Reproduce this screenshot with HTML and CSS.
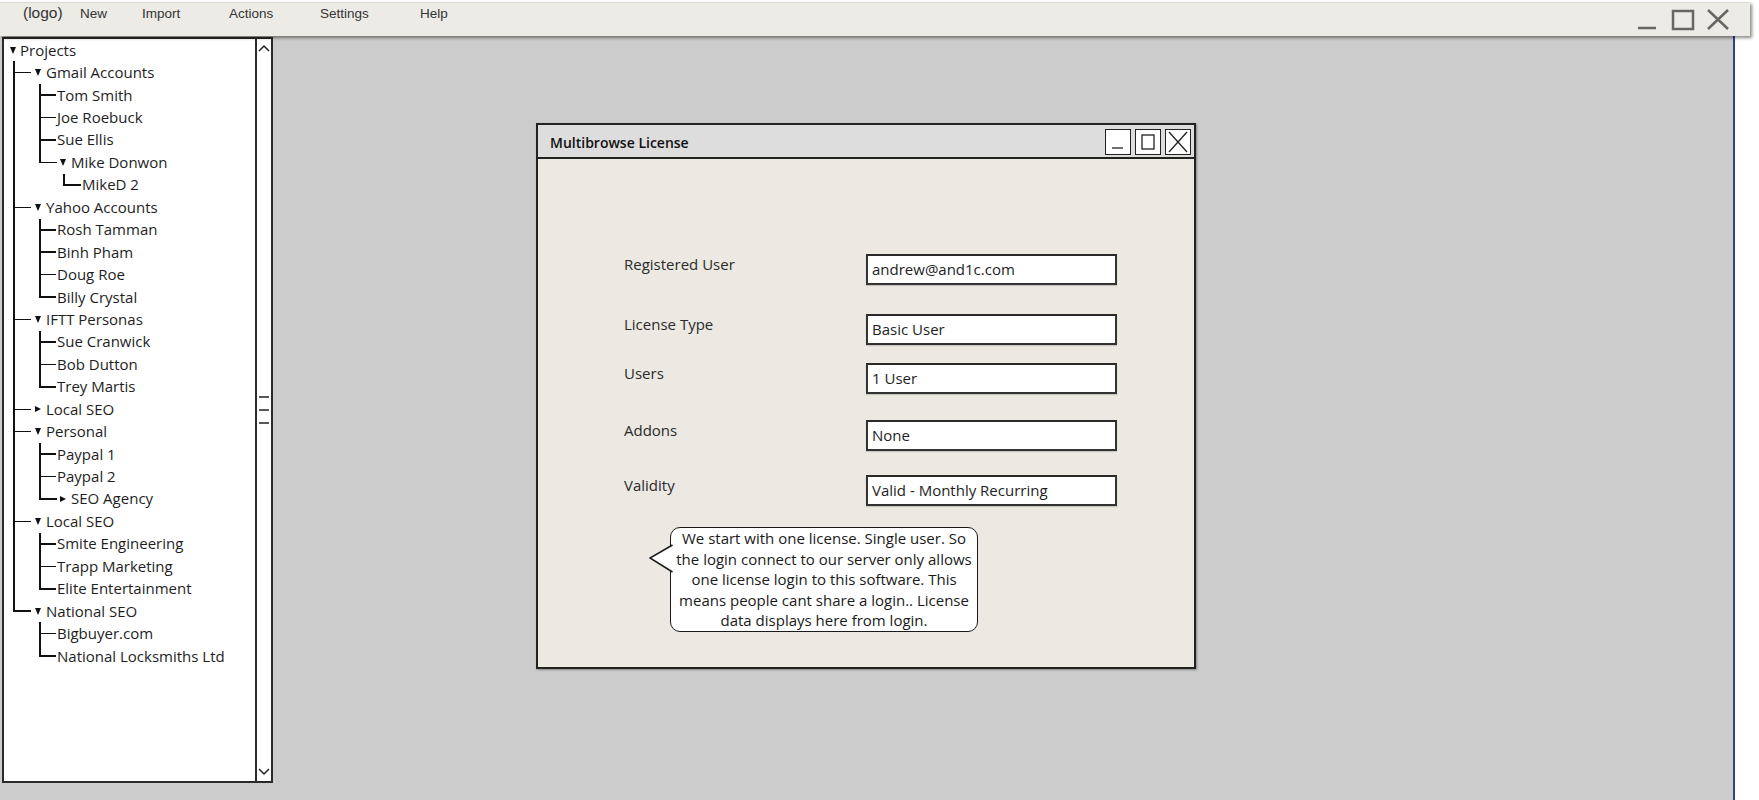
FILE: index.html
```html
<!DOCTYPE html>
<html lang="en">
<head>
<meta charset="utf-8">
<title>Multibrowse</title>
<link rel="stylesheet" href="styles.css">
</head>
<body>
<header class="topbar">
  <nav class="menu">
    <span class="mi m-logo">(logo)</span>
    <span class="mi m-new">New</span>
    <span class="mi m-import">Import</span>
    <span class="mi m-actions">Actions</span>
    <span class="mi m-settings">Settings</span>
    <span class="mi m-help">Help</span>
  </nav>
  <svg class="winctl" width="92" height="34" viewBox="0 0 92 34">
    <line x1="0" y1="26" x2="18" y2="26"/>
    <rect x="35" y="9" width="20" height="18"/>
    <line x1="70" y1="8" x2="90" y2="27"/>
    <line x1="90" y1="8" x2="70" y2="27"/>
  </svg>
</header>

<main class="workspace">
  <aside class="panel">
    <div class="treewrap">
      <ul class="tree">
        <li class="root">
          <div class="row"><i class="tri down"></i>Projects</div>
          <ul class="l1">
            <li class="folder">
              <div class="row"><i class="tri down"></i>Gmail Accounts</div>
              <ul class="l2">
                <li><div class="row">Tom Smith</div></li>
                <li><div class="row">Joe Roebuck</div></li>
                <li><div class="row">Sue Ellis</div></li>
                <li class="folder">
                  <div class="row"><i class="tri down"></i>Mike Donwon</div>
                  <ul class="l3">
                    <li><div class="row">MikeD 2</div></li>
                  </ul>
                </li>
              </ul>
            </li>
            <li class="folder">
              <div class="row"><i class="tri down"></i>Yahoo Accounts</div>
              <ul class="l2">
                <li><div class="row">Rosh Tamman</div></li>
                <li><div class="row">Binh Pham</div></li>
                <li><div class="row">Doug Roe</div></li>
                <li><div class="row">Billy Crystal</div></li>
              </ul>
            </li>
            <li class="folder">
              <div class="row"><i class="tri down"></i>IFTT Personas</div>
              <ul class="l2">
                <li><div class="row">Sue Cranwick</div></li>
                <li><div class="row">Bob Dutton</div></li>
                <li><div class="row">Trey Martis</div></li>
              </ul>
            </li>
            <li class="folder">
              <div class="row"><i class="tri right"></i>Local SEO</div>
            </li>
            <li class="folder">
              <div class="row"><i class="tri down"></i>Personal</div>
              <ul class="l2">
                <li><div class="row">Paypal 1</div></li>
                <li><div class="row">Paypal 2</div></li>
                <li class="folder"><div class="row"><i class="tri right"></i>SEO Agency</div></li>
              </ul>
            </li>
            <li class="folder">
              <div class="row"><i class="tri down"></i>Local SEO</div>
              <ul class="l2">
                <li><div class="row">Smite Engineering</div></li>
                <li><div class="row">Trapp Marketing</div></li>
                <li><div class="row">Elite Entertainment</div></li>
              </ul>
            </li>
            <li class="folder">
              <div class="row"><i class="tri down"></i>National SEO</div>
              <ul class="l2">
                <li><div class="row">Bigbuyer.com</div></li>
                <li><div class="row">National Locksmiths Ltd</div></li>
              </ul>
            </li>
          </ul>
        </li>
      </ul>
    </div>
    <div class="scrollbar">
      <svg class="sb-arrow" width="14" height="14" viewBox="0 0 14 14"><polyline points="2,10 7,5 12,10"/></svg>
      <svg class="sb-grip" width="14" height="30" viewBox="0 0 14 30"><line x1="2" y1="2" x2="12" y2="2"/><line x1="2" y1="15" x2="12" y2="15"/><line x1="2" y1="28" x2="12" y2="28"/></svg>
      <svg class="sb-arrow" width="14" height="14" viewBox="0 0 14 14"><polyline points="2,4 7,9 12,4"/></svg>
    </div>
  </aside>

  <section class="stage">
    <div class="dialog">
      <div class="titlebar">
        <span class="title">Multibrowse License</span>
        <div class="tbtns">
          <span class="tbtn"><svg width="24" height="24" viewBox="0 0 24 24"><line x1="6" y1="18" x2="17" y2="18"/></svg></span>
          <span class="tbtn"><svg width="24" height="24" viewBox="0 0 24 24"><rect x="6" y="5" width="12" height="14"/></svg></span>
          <span class="tbtn"><svg width="24" height="24" viewBox="0 0 24 24"><line x1="3" y1="2" x2="21" y2="22"/><line x1="21" y1="2" x2="3" y2="22"/></svg></span>
        </div>
      </div>
      <div class="dbody">
        <div class="form">
          <div class="field f1"><label>Registered User</label><div class="input">andrew@and1c.com</div></div>
          <div class="field f2"><label>License Type</label><div class="input">Basic User</div></div>
          <div class="field f3"><label>Users</label><div class="input">1 User</div></div>
          <div class="field f4"><label>Addons</label><div class="input">None</div></div>
          <div class="field f5"><label>Validity</label><div class="input">Valid - Monthly Recurring</div></div>
        </div>
        <div class="callout">
          <svg class="pointer" width="24" height="30" viewBox="0 0 24 30"><polyline points="23.5,1 1,14 23.5,28"/></svg>
          <p>We start with one license. Single user. So<br>the login connect to our server only allows<br>one license login to this software. This<br>means people cant share a login.. License<br>data displays here from login.</p>
        </div>
      </div>
    </div>
  </section>
</main>
</body>
</html>
```

FILE: styles.css
```css
* { box-sizing: border-box; }

html, body {
  margin: 0;
  padding: 0;
  background: #ffffff;
  overflow: hidden;
}

body {
  width: 1759px;
  height: 800px;
  font-family: "Open Sans", "Noto Sans", sans-serif;
  color: #222;
}

/* ---------- top bar ---------- */
.topbar {
  position: relative;
  z-index: 2;
  display: flex;
  align-items: flex-start;
  width: 1750px;
  height: 34px;
  margin-top: 2px;
  background: #ecebe5;
  border-top: 1px solid #dcdcd6;
  box-shadow: 2px 2px 3px rgba(0, 0, 0, 0.45);
}

.menu {
  display: flex;
  align-items: center;
  height: 20px;
  padding-left: 23px;
  font-family: "Liberation Sans", Arial, sans-serif;
  font-size: 13.5px;
  color: #333;
}

.mi { display: block; white-space: nowrap; }
.m-logo { width: 57px; font-size: 15.5px; }
.m-new { width: 62px; }
.m-import { width: 87px; }
.m-actions { width: 91px; }
.m-settings { width: 100px; }

.winctl {
  margin-left: auto;
  margin-right: 20px;
  margin-top: -1px;
  fill: none;
  stroke: #666;
  stroke-width: 2.5;
}

/* ---------- workspace ---------- */
.workspace {
  display: flex;
  align-items: flex-start;
  width: 1735px;
  height: 764px;
  background: #cccccc;
  border-right: 2px solid #2d4291;
}

.panel {
  display: flex;
  width: 271px;
  height: 746px;
  margin-top: 1px;
  margin-left: 2px;
  background: #fff;
  border: 2px solid #2a2a2a;
}

.treewrap {
  flex: 1;
  overflow: hidden;
}

.scrollbar {
  display: flex;
  flex-direction: column;
  align-items: center;
  justify-content: space-between;
  width: 16px;
  padding: 2px 0 2px;
  border-left: 2px solid #2a2a2a;
}

.scrollbar svg {
  fill: none;
  stroke: #222;
  stroke-width: 1.5;
}

/* ---------- tree ---------- */
.tree, .tree ul {
  list-style: none;
  margin: 0;
  padding: 0;
}

.tree {
  font-size: 15px;
  color: #1e1e1e;
}

.tree li { position: relative; }

.row {
  display: flex;
  align-items: center;
  height: 22.45px;
  white-space: nowrap;
  line-height: 1;
}

.tri {
  display: inline-block;
  width: 0;
  height: 0;
  flex: none;
}

.tri.down {
  border-left: 3.5px solid transparent;
  border-right: 3.5px solid transparent;
  border-top: 7px solid #111;
  margin-right: 5px;
}

.tri.right {
  border-top: 3.5px solid transparent;
  border-bottom: 3.5px solid transparent;
  border-left: 6px solid #111;
  margin-right: 5px;
}

.root > .row { padding-left: 6px; }
.root > .row .tri { margin-right: 4px; }

/* connector lines */
.l1 > li::before,
.l2 > li::before,
.l3 > li::before {
  content: "";
  position: absolute;
  top: 0;
  bottom: 0;
  width: 1.5px;
  background: #111;
}

.l1 > li:last-child::before,
.l2 > li:last-child::before,
.l3 > li:last-child::before {
  bottom: auto;
  height: 11.5px;
}

.l1 > li::after,
.l2 > li::after,
.l3 > li::after {
  content: "";
  position: absolute;
  top: 10.5px;
  height: 1.5px;
  background: #111;
}

.l1 > li::before, .l1 > li::after { left: 9px; }
.l1 > li::after { width: 18px; }
.l1 > li > .row { padding-left: 31px; }

.l2 > li::before, .l2 > li::after { left: 35px; }
.l2 > li::after { width: 17px; }
.l2 > li > .row { padding-left: 53px; }
.l2 > li.folder::after { width: 18px; }
.l2 > li.folder > .row { padding-left: 56px; }

.l3 > li::before, .l3 > li::after { left: 59px; }
.l3 > li::after { width: 18px; }
.l3 > li > .row { padding-left: 78px; }

/* ---------- dialog ---------- */
.stage {
  flex: 1;
}

.dialog {
  width: 660px;
  height: 546px;
  margin-top: 87px;
  margin-left: 263px;
  background: #ebe9e2;
  border: 2px solid #222;
  box-shadow: 1px 1px 2px rgba(0, 0, 0, 0.35);
  display: flex;
  flex-direction: column;
}

.titlebar {
  display: flex;
  align-items: center;
  height: 34px;
  padding: 0 3px 0 12px;
  background: #dddddd;
  border-bottom: 2px solid #222;
}

.title {
  font-size: 14px;
  font-weight: 600;
  color: #111;
  margin-top: 2px;
}

.tbtns {
  display: flex;
  gap: 4px;
  margin-left: auto;
  margin-top: 1px;
}

.tbtn {
  display: flex;
  width: 26px;
  height: 26px;
  background: #fff;
  border: 1px solid #222;
}

.tbtn svg {
  fill: none;
  stroke: #222;
  stroke-width: 1.3;
}

.dbody {
  flex: 1;
  padding-top: 95px;
}

.form {
  padding-left: 86px;
}

.field {
  display: grid;
  grid-template-columns: 242px 251px;
  align-items: start;
}

.field label {
  font-size: 15px;
  line-height: 21px;
  color: #2a2a2a;
}

.f2 { margin-top: 29px; }
.f3 { margin-top: 18px; }
.f4 { margin-top: 26px; }
.f5 { margin-top: 24px; }

.input {
  height: 31px;
  padding: 0 4px;
  background: #fff;
  border: 2px solid #333;
  border-top-color: #2a2a2a;
  font-size: 15px;
  line-height: 27px;
  color: #1e1e1e;
  box-shadow: 0 1px 1px rgba(0, 0, 0, 0.15);
}

.callout {
  position: relative;
  width: 308px;
  margin-top: 21px;
  margin-left: 132px;
  background: #fff;
  border: 1.5px solid #1a1a1a;
  border-radius: 10px;
}

.callout p {
  margin: 0;
  padding: 0 2px 0;
  text-align: center;
  font-size: 15px;
  line-height: 20.5px;
  white-space: nowrap;
  color: #1a1a1a;
}

.pointer {
  position: absolute;
  left: -22.5px;
  top: 16px;
  fill: #fff;
  stroke: #1a1a1a;
  stroke-width: 1.5;
}
```
